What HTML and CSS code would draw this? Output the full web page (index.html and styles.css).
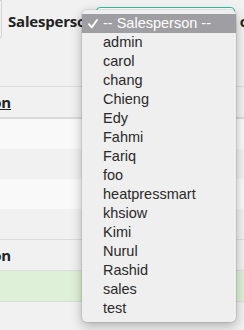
FILE: index.html
```html
<!DOCTYPE html>
<html lang="en">
<head>
    <meta charset="UTF-8">
    <title>Sales Report</title>
    <link rel="stylesheet" href="styles.css">
</head>
<body>
    <div class="toolbar">
        <div class="prev-field"></div>
        <label class="label">Salesperson</label>
        <div class="select">-- Salesperson --</div>
        <label class="label next">order by</label>
    </div>

    <div class="grid">
        <div class="row head">
            <div class="cell name"><a href="#">Salesperson</a></div>
        </div>
        <div class="row odd"><div class="cell name"></div></div>
        <div class="row"><div class="cell name"></div></div>
        <div class="row odd"><div class="cell name"></div></div>
        <div class="row"><div class="cell name"></div></div>
        <div class="row total">
            <div class="cell name">Salesperson</div>
        </div>
        <div class="row success"><div class="cell name"></div></div>
    </div>

    <!-- open dropdown of the salesperson select -->
    <ul class="menu">
        <li class="selected">
            <svg class="check" width="10" height="10" viewBox="0 0 10 10">
                <path d="M1 5.2 L3.8 8.4 L9 1" fill="none" stroke="#fff" stroke-width="1.9" stroke-linecap="round" stroke-linejoin="round"/>
            </svg>
            -- Salesperson --
        </li>
        <li>admin</li>
        <li>carol</li>
        <li>chang</li>
        <li>Chieng</li>
        <li>Edy</li>
        <li>Fahmi</li>
        <li>Fariq</li>
        <li>foo</li>
        <li>heatpressmart</li>
        <li>khsiow</li>
        <li>Kimi</li>
        <li>Nurul</li>
        <li>Rashid</li>
        <li>sales</li>
        <li>test</li>
    </ul>
</body>
</html>
```

FILE: styles.css
```css
body {
    margin: 0;
    background-color: #f1f1f1;
    font-family: "Open Sans", "Liberation Sans", sans-serif;
    color: #222;
    overflow: hidden;
    position: relative;
    height: 330px;
}

.toolbar {
    display: flex;
    align-items: flex-start;
    white-space: nowrap;
    height: 38px;
}

.prev-field {
    flex: 0 0 60px;
    height: 37px;
    margin-left: -60px;
    border: 1px solid #d2d2d2;
    border-radius: 0 0 3px 0;
}

.label {
    flex: 0 0 85px;
    margin-left: 6px;
    margin-top: 10px;
    font-size: 15px;
    font-weight: 700;
    line-height: 22px;
    letter-spacing: -0.2px;
}

.label.next {
    margin-left: 5px;
}

.select {
    flex: 0 0 139px;
    height: 28px;
    margin-top: 7px;
    border: 1px solid #2fbf9f;
    border-radius: 4px;
    background-color: #fff;
    font-size: 13px;
    line-height: 28px;
    padding-left: 8px;
    box-sizing: border-box;
    width: 141px;
}

.grid {
    margin-top: 48px;
    margin-left: -101px;
}

.row {
    height: 30px;
    display: flex;
    align-items: center;
}

.row.odd {
    background-color: #f9f9f9;
}

.cell.name {
    width: 112px;
    text-align: right;
    padding-right: 8px;
    font-size: 15px;
    font-weight: 700;
    letter-spacing: -0.2px;
}

.head {
    border-top: 1px solid #dcdcdc;
    border-bottom: 2px solid #dadada;
}

.head a {
    color: #222;
    text-decoration: underline;
}

.total {
    border-top: 1px solid #dcdcdc;
}

.success {
    background-color: #dff0d8;
    border-top: 1px solid #dcdcdc;
    border-bottom: 1px solid #dcdcdc;
}

.menu {
    position: absolute;
    left: 82px;
    top: 10px;
    width: 154px;
    margin: 0;
    padding: 4px 0;
    list-style: none;
    background-color: #efefef;
    border-radius: 5px;
    box-shadow: 0 0 0 1px rgba(0, 0, 0, 0.08), 0 4px 12px rgba(0, 0, 0, 0.28);
    font-family: "Liberation Sans", Arial, sans-serif;
    font-size: 14.5px;
    color: #2a2a2a;
}

.menu li {
    height: 19px;
    line-height: 19px;
    padding-left: 21px;
    position: relative;
}

.menu li.selected {
    background-color: #9f9ea3;
    color: #fff;
}

.check {
    position: absolute;
    left: 6px;
    top: 5px;
}
```
